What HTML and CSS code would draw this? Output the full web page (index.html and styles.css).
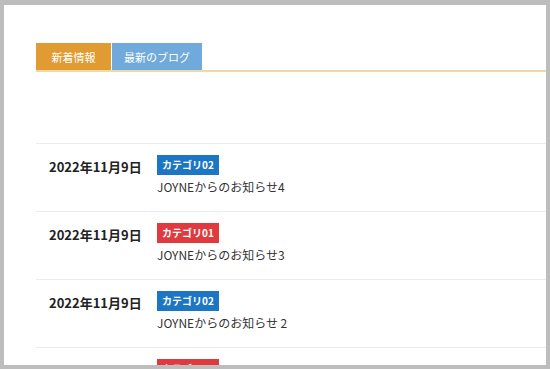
FILE: index.html
```html
<!DOCTYPE html>
<html lang="ja">
<head>
    <meta charset="UTF-8">
    <meta name="viewport" content="width=device-width, initial-scale=1.0">
    <title>お知らせ</title>
    <link rel="stylesheet" href="styles.css">
</head>
<body>

<div class="frame">
    <div class="news">
        <!-- Tabs -->
        <div class="tabs">
            <button class="tab tab-news">新着情報</button>
            <button class="tab tab-blog">最新のブログ</button>
        </div>

        <!-- News list -->
        <ul class="news-list">
            <li class="news-item">
                <span class="news-date">2022年11月9日</span>
                <div class="news-body">
                    <span class="cat cat-02">カテゴリ02</span>
                    <p class="news-title">JOYNEからのお知らせ4</p>
                </div>
            </li>
            <li class="news-item">
                <span class="news-date">2022年11月9日</span>
                <div class="news-body">
                    <span class="cat cat-01">カテゴリ01</span>
                    <p class="news-title">JOYNEからのお知らせ3</p>
                </div>
            </li>
            <li class="news-item">
                <span class="news-date">2022年11月9日</span>
                <div class="news-body">
                    <span class="cat cat-02">カテゴリ02</span>
                    <p class="news-title">JOYNEからのお知らせ 2</p>
                </div>
            </li>
            <li class="news-item">
                <span class="news-date">2022年11月9日</span>
                <div class="news-body">
                    <span class="cat cat-01">カテゴリ01</span>
                    <p class="news-title">JOYNEからのお知らせ1</p>
                </div>
            </li>
        </ul>
    </div>
</div>

</body>
</html>
```

FILE: styles.css
```css
body {
    margin: 0;
    font-family: "Noto Sans CJK JP", "Noto Sans", sans-serif;
    color: #333;
    background-color: #fff;
}

.frame {
    height: 369px;
    box-sizing: border-box;
    border: 4px solid #bdbdbd;
    border-top-width: 5px;
    overflow: hidden;
    background-color: #fff;
}

.news {
    padding: 38px 0 0 32px;
}

.tabs {
    display: flex;
    gap: 1px;
    border-bottom: 2px solid #f0d8a8;
}

.tab {
    height: 27px;
    padding: 0;
    border: none;
    color: #fff;
    font-family: inherit;
    font-size: 11px;
    cursor: pointer;
}

.tab-news {
    width: 75px;
    background-color: #e09b33;
}

.tab-blog {
    width: 90px;
    background-color: #70a9dc;
}

.news-list {
    list-style: none;
    margin: 71px 0 0;
    padding: 0;
}

.news-item {
    display: flex;
    align-items: flex-start;
    height: 68px;
    box-sizing: border-box;
    padding: 11px 0 0 13px;
    border-top: 1px solid #ebebeb;
}

.news-date {
    width: 108px;
    padding-top: 1px;
    font-size: 13px;
    font-weight: bold;
    line-height: 22px;
    color: #222;
}

.news-body {
    display: flex;
    flex-direction: column;
    align-items: flex-start;
}

.cat {
    height: 20px;
    padding: 0 5px;
    color: #fff;
    font-size: 10px;
    font-weight: bold;
    line-height: 20px;
}

.cat-01 {
    background-color: #e03a3e;
}

.cat-02 {
    background-color: #1c76c4;
}

.news-title {
    margin: 2px 0 0;
    font-size: 12px;
    line-height: 20px;
    color: #333;
}
```
